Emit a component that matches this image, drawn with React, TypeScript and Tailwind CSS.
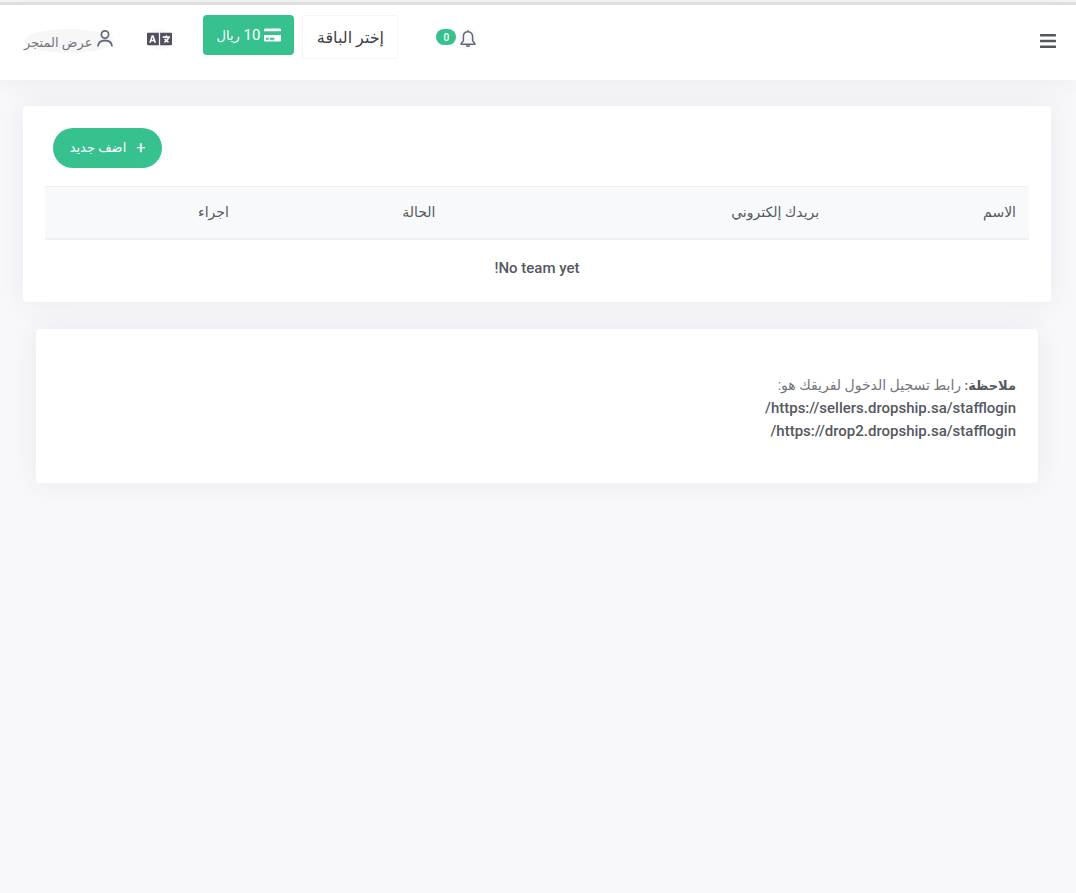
import { FaBars, FaCreditCard, FaLanguage } from "react-icons/fa";

const columns = [
  { label: "الاسم", width: "w-[20%]" },
  { label: "بريدك إلكتروني", width: "w-[39%]" },
  { label: "الحالة", width: "w-[21%]" },
  { label: "اجراء", width: "w-[20%]" },
];

const loginLinks = [
  "https://sellers.dropship.sa/stafflogin/",
  "https://drop2.dropship.sa/stafflogin/",
];

const BellIcon = () => (
  <svg
    viewBox="0 0 18 20"
    className="h-5 w-[18px]"
    fill="none"
    stroke="currentColor"
    strokeWidth="1.5"
    strokeLinejoin="round"
  >
    <path d="M9 1.200v1.600M9 2.800c-3 0-4.600 2.100-4.600 4.800v3.800c0 1.500-2.400 2.200-2.400 3.900h14c0-1.700-2.400-2.400-2.400-3.900V7.600C13.600 4.900 12 2.800 9 2.800z" />
    <path d="M7.400 16.300c.2.700.8 1 1.600 1s1.400-.3 1.600-1" />
  </svg>
);

const UserIcon = () => (
  <svg
    viewBox="0 0 18 18"
    className="size-[18px]"
    fill="none"
    stroke="currentColor"
    strokeWidth="1.8"
  >
    <circle cx="9" cy="5.500" r="3.600" />
    <path d="M1.900 17.500c.3-3.900 3.200-6 7.100-6s6.800 2.100 7.100 6" />
  </svg>
);

const Header = () => {
  return (
    <header className="flex items-start justify-between border-t-3 border-[#dfdfdf] bg-white pr-5 pl-6 shadow-[0_0_28px_rgba(70,65,90,0.08)]">
      <button className="mt-6 text-[#55575f]" aria-label="القائمة">
        <FaBars className="h-6 w-4" />
      </button>

      <div className="flex h-[75px] items-start">
        <button
          className="mt-6 flex items-start gap-[3px] text-[#65687a]"
          aria-label="الإشعارات"
        >
          <span className="rounded-full bg-[#f8f8fa]">
            <BellIcon />
          </span>
          <span className="flex h-4 w-5 items-center justify-center rounded-full bg-[#36c18f] text-[10px] font-medium text-white">
            0
          </span>
        </button>

        <button className="mt-[10px] mr-[38px] h-11 w-24 rounded-xs border border-[#f6f6f8] pt-[2px] text-base text-[#3f4047]">
          إختر الباقة
        </button>

        <button className="mt-[10px] mr-2 flex h-10 w-[91px] items-center justify-center gap-1 rounded-sm bg-[#36c18f] text-[15px] text-white">
          <FaCreditCard className="h-4 w-[17px]" />
          <span>
            10 <span className="text-[13px]">ريال</span>
          </span>
        </button>

        <button
          className="mt-6 mr-[31px] rounded-full bg-[#f8f8fa] text-[#50505e]"
          aria-label="اللغة"
        >
          <FaLanguage className="h-5 w-[25px]" />
        </button>

        <a
          href="#store"
          className="mt-6 mr-[33px] flex h-6 items-start gap-1 rounded-[50%] bg-[#f7f7f8] text-[13px] text-[#74767e]"
        >
          <span className="text-[#65687a]">
            <UserIcon />
          </span>
          <span className="pt-1">عرض المتجر</span>
        </a>
      </div>
    </header>
  );
};

const TeamCard = () => {
  return (
    <section className="rounded-sm bg-white px-[22px] pt-[22px] pb-3 shadow-[0_0_28px_rgba(70,65,90,0.08)]">
      <div className="flex justify-end pl-2">
        <button className="flex h-10 w-[109px] items-center justify-center gap-[10px] rounded-full bg-[#36c18f] text-[13px] text-white">
          <span className="text-base">+</span>
          <span>اضف جديد</span>
        </button>
      </div>

      <table className="mt-[18px] w-full table-fixed text-[#56595f]">
        <thead>
          <tr className="h-[52px] border-t border-b-2 border-[#f0f1f5] bg-[#f8f9fb]">
            {columns.map((column) => (
              <th
                key={column.label}
                className={`px-[13px] text-right text-sm font-medium ${column.width}`}
              >
                {column.label}
              </th>
            ))}
          </tr>
        </thead>
        <tbody>
          <tr>
            <td
              colSpan={4}
              className="h-[51px] pt-2 text-center text-[15px] font-medium"
            >
              No team yet!
            </td>
          </tr>
        </tbody>
      </table>
    </section>
  );
};

const NoteCard = () => {
  return (
    <section className="mx-[13px] mt-[27px] rounded-sm bg-white px-[22px] pt-[45px] pb-10 text-[#56595f] shadow-[0_0_28px_rgba(70,65,90,0.08)]">
      <p className="text-sm leading-[23px] text-[#74767e]">
        <strong className="text-[13px] font-semibold text-[#56595f]">
          ملاحظة:
        </strong>{" "}
        رابط تسجيل الدخول لفريقك هو:
      </p>
      {loginLinks.map((link) => (
        <p key={link} className="text-[15px] leading-[23px] font-medium">
          <a href={link}>{link}</a>
        </p>
      ))}
    </section>
  );
};

const App = () => {
  return (
    <div
      dir="rtl"
      className="min-h-screen bg-[#f8f8fb] pt-[2px] font-['Roboto','DejaVu_Sans',sans-serif]"
    >
      <Header />
      <main className="pt-[26px] pr-[25px] pl-[23px]">
        <TeamCard />
        <NoteCard />
      </main>
    </div>
  );
};

export default App;
